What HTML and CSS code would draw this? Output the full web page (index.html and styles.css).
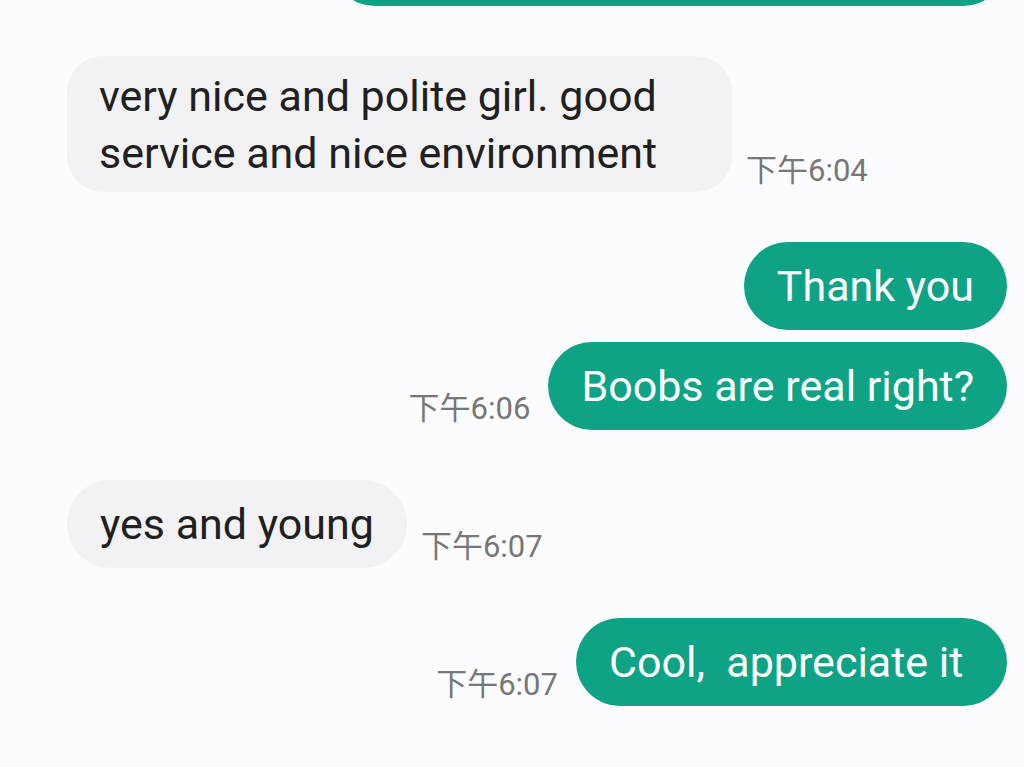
FILE: index.html
```html
<!DOCTYPE html>
<html lang="zh-CN">
<head>
    <meta charset="UTF-8">
    <meta name="viewport" content="width=device-width, initial-scale=1.0">
    <title>Chat</title>
    <link rel="stylesheet" href="styles.css">
</head>
<body>
    <div class="chat">
        <div class="row out first">
            <span class="time">下午6:03</span>
            <div class="bubble green cut">Okay</div>
        </div>
        <div class="row in">
            <div class="bubble gray wide">very nice and polite girl. good<br>service and nice environment</div>
            <span class="time">下午6:04</span>
        </div>
        <div class="row out">
            <div class="bubble green">Thank you</div>
        </div>
        <div class="row out tight">
            <span class="time">下午6:06</span>
            <div class="bubble green">Boobs are real right?</div>
        </div>
        <div class="row in">
            <div class="bubble gray">yes and young</div>
            <span class="time">下午6:07</span>
        </div>
        <div class="row out">
            <span class="time">下午6:07</span>
            <div class="bubble green">Cool,&nbsp; appreciate it&nbsp;</div>
        </div>
    </div>
</body>
</html>
```

FILE: styles.css
```css
body {
    margin: 0;
    padding: 0;
    background-color: #fcfcfe;
    font-family: Roboto, "Noto Sans CJK SC", sans-serif;
    overflow: hidden;
}
.chat {
    display: flex;
    flex-direction: column;
    gap: 50px;
    padding: 0 17px 0 67px;
}
.row {
    display: flex;
    align-items: flex-end;
    gap: 14px;
}
.row.out {
    justify-content: flex-end;
    gap: 18px;
}
.row.first {
    margin-top: -82px;
}
.row.tight {
    margin-top: -38px;
}
.bubble {
    font-size: 43px;
    line-height: 56px;
    padding: 16px 33px;
    border-radius: 44px;
    white-space: nowrap;
}
.bubble.gray {
    background-color: #f2f2f4;
    color: #202020;
}
.bubble.green {
    background-color: #0fa386;
    color: #fff;
}
.bubble.cut {
    width: 610px;
    color: #0fa386;
}
.bubble.wide {
    width: 601px;
    padding: 12px 32px 10px;
    line-height: 57px;
    border-radius: 36px;
}
.time {
    font-size: 31px;
    line-height: 34px;
    color: #777;
    margin-bottom: 4px;
    white-space: nowrap;
}
```
